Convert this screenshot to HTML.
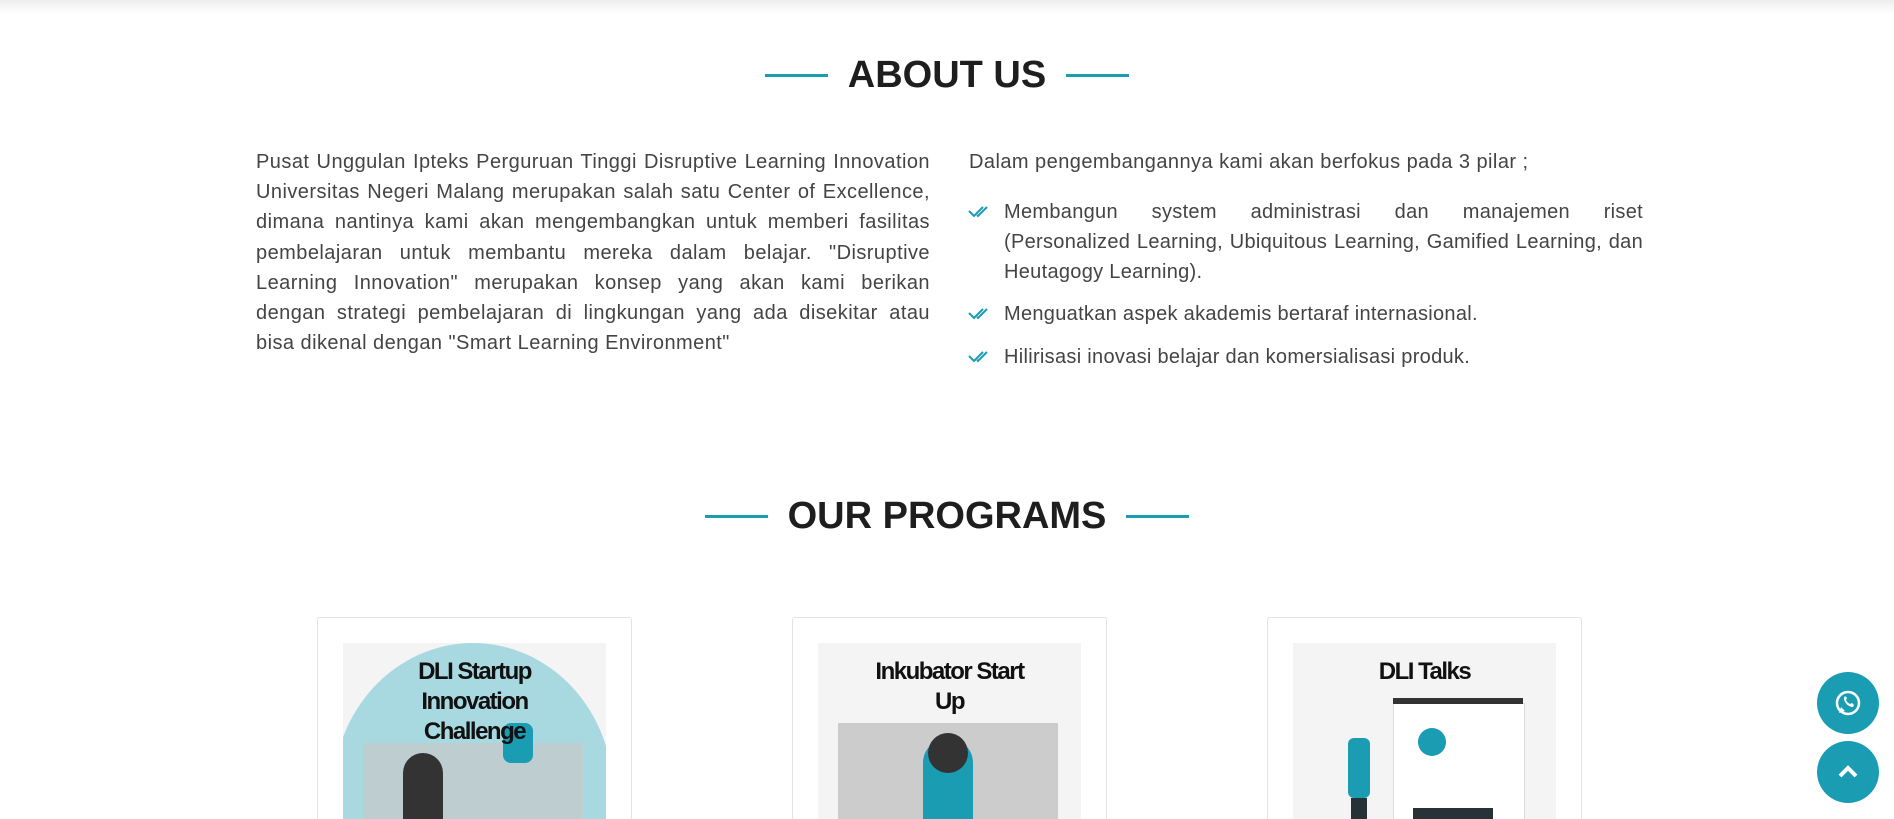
<!DOCTYPE html>
<html style="overflow:hidden;height:819px"><head><meta charset="utf-8"><style>
body{margin:0;width:1894px;height:819px;overflow:hidden;background:#fff;font-family:"Liberation Sans",sans-serif;position:relative}
.shadow{position:absolute;left:0;top:0;width:1894px;height:14px;background:linear-gradient(rgba(0,0,0,.07),rgba(0,0,0,0))}
.h{position:absolute;left:0;width:1894px;text-align:center;font-weight:bold;font-size:38px;color:#1e1e1e;letter-spacing:0}
.h span{display:inline-block;vertical-align:middle}
.h .ln{width:63px;height:3px;background:#1a9cb3;margin:0 20px}
.p{position:absolute;font-size:20px;letter-spacing:0.45px;line-height:30.2px;color:#444;text-align:justify}
.li{position:absolute;left:1004px;width:639px;font-size:20px;letter-spacing:0.3px;line-height:30.2px;color:#444;text-align:justify}
.li .j{text-align:justify;text-align-last:justify;white-space:nowrap}
.ck{position:absolute;left:968px}
.card{position:absolute;top:617px;width:313px;height:202px;border:1px solid #e3e3e3;border-bottom:none;border-radius:3px 3px 0 0;background:#fff;overflow:hidden}
.img{position:absolute;left:25px;top:25px;width:263px;height:200px;background:#f4f4f4;overflow:hidden}
.t{position:absolute;left:0;top:14px;width:263px;text-align:center;font-weight:bold;font-size:24px;line-height:30px;letter-spacing:-1.5px;color:#111}
.fb{position:absolute;left:1817px;width:62px;height:62px;border-radius:50%;background:#1a9cb3}
</style></head><body>
<div class="shadow"></div>
<div class="h" style="top:53px"><span class="ln"></span><span>ABOUT US</span><span class="ln"></span></div>
<div class="p" style="left:256px;top:147px;width:674px">Pusat Unggulan Ipteks Perguruan Tinggi Disruptive Learning Innovation Universitas Negeri Malang merupakan salah satu Center of Excellence, dimana nantinya kami akan mengembangkan untuk memberi fasilitas pembelajaran untuk membantu mereka dalam belajar. "Disruptive Learning Innovation" merupakan konsep yang akan kami berikan dengan strategi pembelajaran di lingkungan yang ada disekitar atau bisa dikenal dengan "Smart Learning Environment"</div>
<div class="p" style="left:969px;top:147px;width:680px">Dalam pengembangannya kami akan berfokus pada 3 pilar ;</div>
<svg class="ck" style="top:205px" width="24" height="14" viewBox="0 0 24 14"><path d="M1 6l5 5 9-9M9 10l1 1 9-9" fill="none" stroke="#1a9cb3" stroke-width="2"/></svg>
<div class="li" style="top:197px"><div class="j">Membangun system administrasi dan manajemen riset</div><div class="j">(Personalized Learning, Ubiquitous Learning, Gamified Learning, dan</div><div>Heutagogy Learning).</div></div>
<svg class="ck" style="top:307px" width="24" height="14" viewBox="0 0 24 14"><path d="M1 6l5 5 9-9M9 10l1 1 9-9" fill="none" stroke="#1a9cb3" stroke-width="2"/></svg>
<div class="li" style="top:299px">Menguatkan aspek akademis bertaraf internasional.</div>
<svg class="ck" style="top:350px" width="24" height="14" viewBox="0 0 24 14"><path d="M1 6l5 5 9-9M9 10l1 1 9-9" fill="none" stroke="#1a9cb3" stroke-width="2"/></svg>
<div class="li" style="top:342px">Hilirisasi inovasi belajar dan komersialisasi produk.</div>
<div class="h" style="top:494px"><span class="ln"></span><span>OUR PROGRAMS</span><span class="ln"></span></div>
<div class="card" style="left:317px"><div class="img"><div style="position:absolute;left:-10px;top:0;width:280px;height:300px;border-radius:50% 50% 0 0;background:#a9d9e0"></div><div style="position:absolute;left:20px;top:100px;width:220px;height:100px;background:#c8c8c8;opacity:.7"></div><div style="position:absolute;left:60px;top:110px;width:40px;height:90px;background:#333;border-radius:20px 20px 0 0"></div><div style="position:absolute;left:160px;top:80px;width:30px;height:40px;background:#1a9cb3;border-radius:8px"></div><div class="t">DLI Startup<br>Innovation<br>Challenge</div></div></div>
<div class="card" style="left:792px"><div class="img"><div style="position:absolute;left:20px;top:80px;width:220px;height:120px;background:#bbb;opacity:.7"></div><div style="position:absolute;left:105px;top:95px;width:50px;height:105px;background:#1a9cb3;border-radius:25px 25px 0 0"></div><div style="position:absolute;left:110px;top:90px;width:40px;height:40px;background:#333;border-radius:50%"></div><div class="t">Inkubator Start<br>Up</div></div></div>
<div class="card" style="left:1267px"><div class="img"><div style="position:absolute;left:100px;top:60px;width:130px;height:140px;background:#fff;border:1px solid #ddd"></div><div style="position:absolute;left:100px;top:55px;width:130px;height:6px;background:#333"></div><div style="position:absolute;left:125px;top:85px;width:28px;height:28px;border-radius:50%;background:#1a9cb3"></div><div style="position:absolute;left:55px;top:95px;width:22px;height:60px;background:#1a9cb3;border-radius:6px"></div><div style="position:absolute;left:58px;top:155px;width:16px;height:50px;background:#263238"></div><div style="position:absolute;left:120px;top:165px;width:80px;height:12px;background:#263238"></div><div class="t">DLI Talks</div></div></div>
<div class="fb" style="top:672px"><svg width="62" height="62" viewBox="0 0 62 62"><circle cx="31" cy="31" r="11" fill="none" stroke="#fff" stroke-width="2.5"/><path d="M22 41l2-6 4 4z" fill="#fff"/><path d="M27 26c0 4 4 9 9 9l1-2-2-2-2 1c-2-1-3-2-4-4l1-2-2-2z" fill="#fff"/></svg></div>
<div class="fb" style="top:741px"><svg width="62" height="62" viewBox="0 0 62 62"><path d="M23 35l8-8 8 8" fill="none" stroke="#fff" stroke-width="4"/></svg></div>
</body></html>
